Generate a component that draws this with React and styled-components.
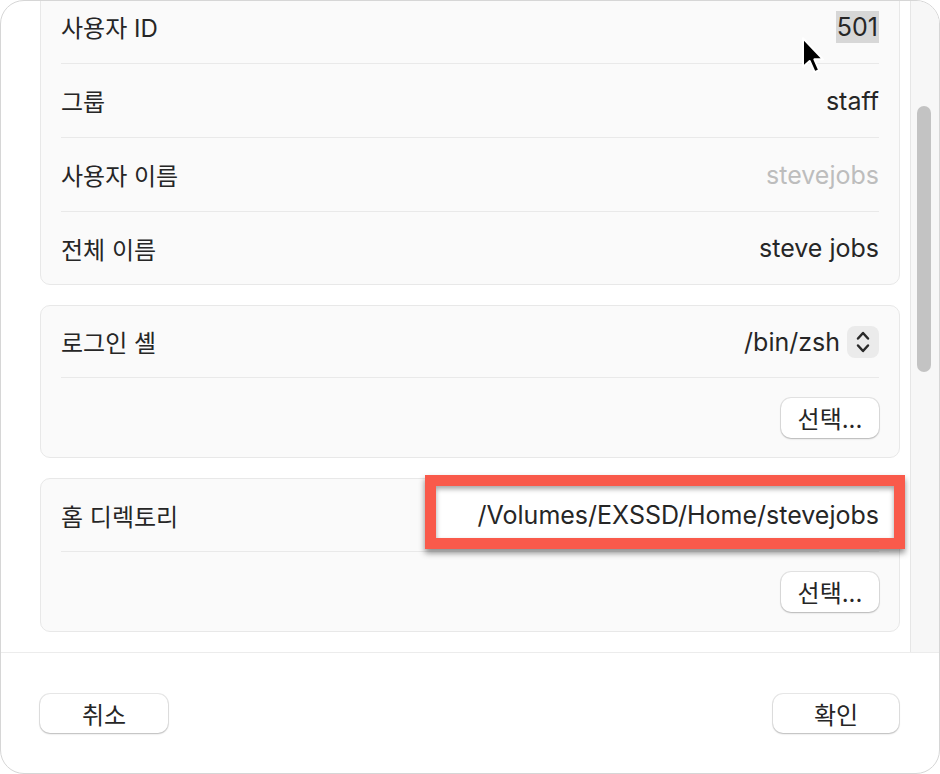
import React from "react";
import styled, { createGlobalStyle } from "styled-components";

const GlobalStyle = createGlobalStyle`
  html, body { margin: 0; padding: 0; background: #ffffff; }
  body { font-family: Inter, "Noto Sans CJK KR", sans-serif; -webkit-font-smoothing: antialiased; }
`;

const Window = styled.div`
  position: relative;
  width: 940px;
  height: 774px;
  box-sizing: border-box;
  border: 1px solid #d6d6d6;
  border-radius: 24px;
  overflow: hidden;
  display: flex;
  flex-direction: column;
  background: #ffffff;
`;

const Main = styled.div`
  display: flex;
  height: 652px;
  box-sizing: border-box;
  border-bottom: 1px solid #ececec;
`;

const Scroll = styled.div`
  flex: 1;
  overflow: hidden;
`;

const Content = styled.div`
  display: flex;
  flex-direction: column;
  gap: 20px;
  margin-top: -12px;
  padding: 0 10px 0 39px;
`;

const Track = styled.div`
  width: 29px;
  box-sizing: border-box;
  border-left: 1px solid #e6e6e6;
  background: #f7f7f7;
  padding-top: 105px;
`;

const Thumb = styled.div`
  margin-left: 6px;
  width: 14px;
  height: 266px;
  border-radius: 7px;
  background: #c3c3c3;
`;

const Card = styled.div`
  background: #fafafa;
  border: 1px solid #e8e8e8;
  border-radius: 10px;
  padding: 0 20px;
`;

const Row = styled.div`
  box-sizing: content-box;
  display: flex;
  align-items: center;
  justify-content: ${(p) => (p.$end ? "flex-end" : "space-between")};
  height: ${(p) => p.$h}px;
  & + & {
    border-top: 1px solid #e9e9e9;
  }
`;

const Label = styled.span`
  font-size: 24px;
  color: #262626;
`;

const Value = styled.span`
  display: inline-flex;
  align-items: center;
  font-size: 25px;
  color: ${(p) => (p.$muted ? "#bdbdbd" : "#262626")};
`;

const Selected = styled.span`
  background: #d7d7d7;
  line-height: 32px;
  padding: 0 1px;
`;

const Stepper = styled.span`
  display: inline-flex;
  align-items: center;
  justify-content: center;
  width: 32px;
  height: 32px;
  margin-left: 7px;
  border-radius: 8px;
  background: #ebebeb;
`;

const Annotated = styled.span`
  position: relative;
  z-index: 0;
  line-height: 32px;
  &::before {
    content: "";
    position: absolute;
    z-index: -1;
    top: -24px;
    right: -26px;
    width: 480px;
    height: 74px;
    box-sizing: border-box;
    border: 11px solid #f95a4b;
    background: #ffffff;
    box-shadow: 0 4px 6px rgba(0, 0, 0, 0.45), inset 0 3px 5px rgba(0, 0, 0, 0.35);
  }
`;

const Button = styled.button`
  height: ${(p) => p.$h || 40}px;
  width: ${(p) => p.$w}px;
  padding: 0;
  border: none;
  border-radius: 10px;
  background: #ffffff;
  box-shadow: 0 0 0 1px rgba(0, 0, 0, 0.09), 0 1px 2px rgba(0, 0, 0, 0.2);
  font-family: inherit;
  font-size: 24px;
  color: #262626;
  display: inline-flex;
  align-items: center;
  justify-content: center;
`;

const Footer = styled.div`
  flex: 1;
  display: flex;
  align-items: center;
  justify-content: space-between;
  padding: 0 40px 0 39px;
`;

const Cursor = styled.svg`
  position: absolute;
  left: 798px;
  top: 35px;
`;

function StepperIcon() {
  return (
    <svg width="32" height="32" viewBox="0 0 32 32">
      <path
        d="M11 12.5 L16 7 L21 12.5 M11 19.5 L16 25 L21 19.5"
        fill="none"
        stroke="#2a2a2a"
        strokeWidth="2.5"
        strokeLinecap="round"
        strokeLinejoin="round"
      />
    </svg>
  );
}

export default function App() {
  return (
    <>
      <GlobalStyle />
      <Window>
        <Main>
          <Scroll>
            <Content>
              <Card>
                <Row $h={73}>
                  <Label>사용자 ID</Label>
                  <Value>
                    <Selected>501</Selected>
                  </Value>
                </Row>
                <Row $h={73}>
                  <Label>그룹</Label>
                  <Value>staff</Value>
                </Row>
                <Row $h={73}>
                  <Label>사용자 이름</Label>
                  <Value $muted>stevejobs</Value>
                </Row>
                <Row $h={72}>
                  <Label>전체 이름</Label>
                  <Value>steve jobs</Value>
                </Row>
              </Card>
              <Card>
                <Row $h={71}>
                  <Label>로그인 셸</Label>
                  <Value>
                    /bin/zsh
                    <Stepper>
                      <StepperIcon />
                    </Stepper>
                  </Value>
                </Row>
                <Row $h={79} $end>
                  <Button $w={98}>선택...</Button>
                </Row>
              </Card>
              <Card>
                <Row $h={72}>
                  <Label>홈 디렉토리</Label>
                  <Value>
                    <Annotated>/Volumes/EXSSD/Home/stevejobs</Annotated>
                  </Value>
                </Row>
                <Row $h={79} $end>
                  <Button $w={98}>선택...</Button>
                </Row>
              </Card>
            </Content>
          </Scroll>
          <Track>
            <Thumb />
          </Track>
        </Main>
        <Footer>
          <Button $w={128} $h={39}>취소</Button>
          <Button $w={126} $h={39}>확인</Button>
        </Footer>
        <Cursor width="28" height="40" viewBox="0 0 24 36">
          <path
            d="M3 2 L3 28 L9 22.5 L13.5 32.5 L17.5 30.8 L13.2 21 L21 21 Z"
            fill="#000000"
            stroke="#ffffff"
            strokeWidth="1.8"
            strokeLinejoin="round"
          />
        </Cursor>
      </Window>
    </>
  );
}
